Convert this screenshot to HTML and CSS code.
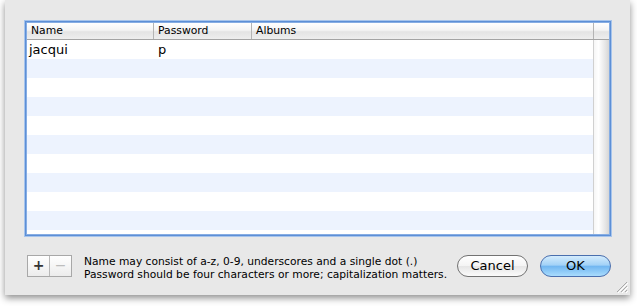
FILE: index.html
```html
<!DOCTYPE html>
<html>
<head>
<meta charset="utf-8">
<link rel="stylesheet" href="styles.css">
</head>
<body>
<div class="sheet">
  <div class="table">
    <div class="header">
      <div class="hcell">Name</div>
      <div class="hcell">Password</div>
      <div class="hcell">Albums</div>
      <div class="hcell corner"></div>
    </div>
    <div class="body">
      <div class="rows">
        <div class="row"><span class="c1">jacqui</span><span class="c2">p</span><span class="c3"></span></div>
        <div class="row alt"></div>
        <div class="row"></div>
        <div class="row alt"></div>
        <div class="row"></div>
        <div class="row alt"></div>
        <div class="row"></div>
        <div class="row alt"></div>
        <div class="row"></div>
        <div class="row alt"></div>
        <div class="row"></div>
      </div>
      <div class="scroll"></div>
    </div>
  </div>
  <div class="footer">
    <div class="segs">
      <div class="seg">+</div>
      <div class="seg dis">−</div>
    </div>
    <div class="hint">
      <div>Name may consist of a-z, 0-9, underscores and a single dot (.)</div>
      <div>Password should be four characters or more; capitalization matters.</div>
    </div>
    <div class="btn">Cancel</div>
    <div class="btn ok">OK</div>
  </div>
  <svg class="grip" width="12" height="12" viewBox="0 0 12 12">
    <path d="M11 1 L1 11 M11 5 L5 11 M11 9 L9 11" stroke="#a8a8a8" stroke-width="1" fill="none"/>
    <path d="M12 2 L2 12 M12 6 L6 12 M12 10 L10 12" stroke="#ffffff" stroke-width="1" fill="none"/>
  </svg>
</div>
</body>
</html>
```
FILE: styles.css
```css
html, body { margin: 0; padding: 0; background: #ffffff; }
body { width: 637px; height: 307px; overflow: hidden; font-family: "DejaVu Sans", "Liberation Sans", sans-serif; }
.sheet {
  position: relative;
  margin-left: 5px;
  width: 625px;
  height: 295px;
  box-sizing: border-box;
  padding: 21px 19px 0 20px;
  background: #e8e8e8;
  box-shadow: 0 3px 7px rgba(0,0,0,0.45);
}
.table {
  height: 215px;
  box-sizing: border-box;
  border: 1px solid #5d8fd6;
  box-shadow: 0 0 0 1px #a6c4ec, inset 0 0 0 1px #86ade3;
  padding: 1px;
  background: #ffffff;
  display: flex;
  flex-direction: column;
  overflow: hidden;
}
.header {
  display: grid;
  grid-template-columns: 127px 98px 342px 1fr;
  height: 16px;
  border-bottom: 1px solid #a4a4a4;
  background: linear-gradient(#ffffff 0%, #f4f4f4 45%, #e4e4e4 55%, #eeeeee 100%);
  font-size: 10.8px;
  color: #000;
}
.hcell {
  border-right: 1px solid #b4b4b4;
  padding-left: 4px;
  line-height: 16px;
}
.hcell.corner { border-right: none; }
.body { flex: 1; display: flex; overflow: hidden; }
.rows { flex: 1; }
.row { height: 19px; display: flex; font-size: 13px; line-height: 19px; color: #000; }
.row.alt { background: #edf3fe; }
.c1 { width: 127px; padding-left: 2px; box-sizing: border-box; }
.c2 { width: 98px; padding-left: 4px; box-sizing: border-box; }
.scroll {
  width: 15px;
  background: linear-gradient(90deg, #f6f6f6 0%, #ffffff 30%, #e6e6e6 75%, #d6d6d6 100%);
  border-left: 1px solid #d0d0d0;
}
.footer {
  display: flex;
  align-items: center;
  margin-top: 19px;
  height: 22px;
  padding-left: 2px;
}
.segs {
  display: flex;
  height: 20px;
  border: 1px solid #a8a8a8;
  background: linear-gradient(#ffffff, #ececec);
}
.seg {
  width: 21px;
  text-align: center;
  font-size: 14px;
  line-height: 19px;
  font-weight: bold;
  color: #333;
}
.seg + .seg { border-left: 1px solid #b8b8b8; }
.seg.dis { color: #bdbdbd; font-weight: normal; }
.hint {
  margin-left: 12px;
  font-size: 10.7px;
  line-height: 13px;
  color: #000;
  width: 361px;
  white-space: nowrap;
  padding-top: 3px;
}
.btn {
  width: 71px;
  height: 22px;
  box-sizing: border-box;
  border: 1px solid #727272;
  border-radius: 11px;
  background: linear-gradient(#ffffff 0%, #f4f4f4 50%, #e6e6e6 52%, #fbfbfb 100%);
  font-size: 13px;
  line-height: 20px;
  text-align: center;
  color: #000;
  margin-left: 12px;
}
.btn.ok {
  border-color: #4a6fae;
  background: linear-gradient(#d4ecfd 0%, #a3d2f7 45%, #72b7f1 52%, #a9dcfd 100%);
}
.grip { position: absolute; right: 2px; bottom: 2px; }
```
